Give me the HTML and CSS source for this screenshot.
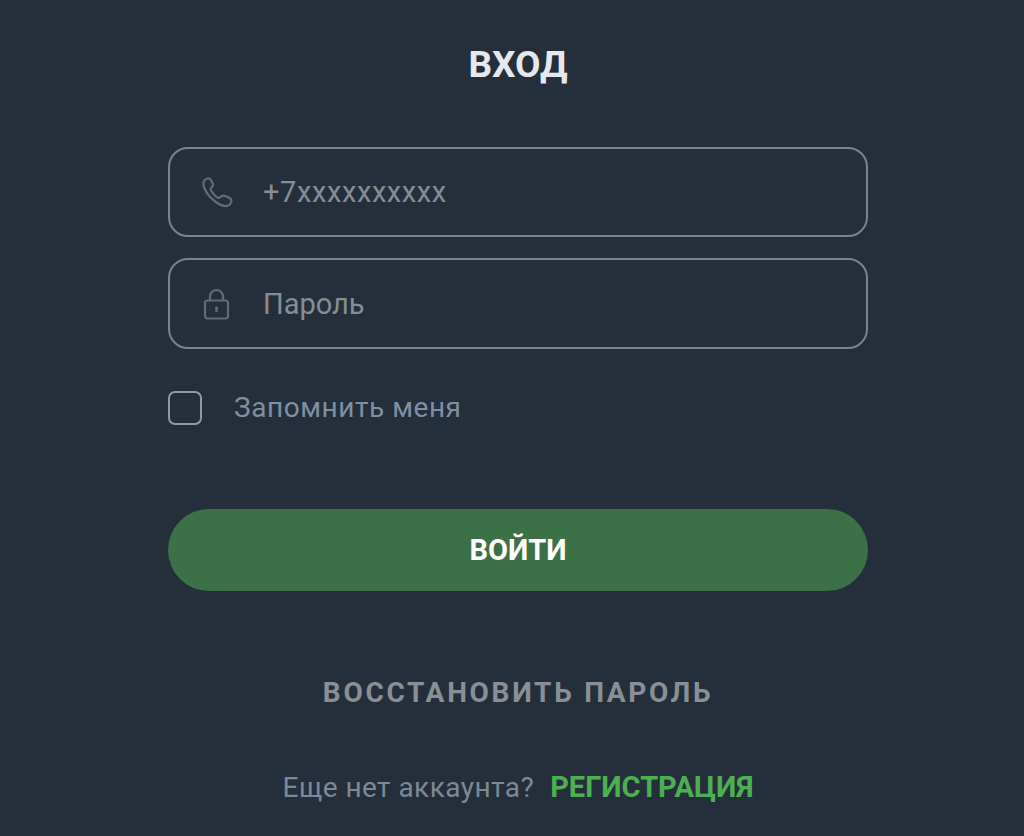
FILE: index.html
```html
<!DOCTYPE html>
<html lang="ru">
<head>
<meta charset="utf-8">
<title>Вход</title>
<link rel="stylesheet" href="styles.css">
</head>
<body>
<main class="login">
  <h1 class="title">ВХОД</h1>
  <form class="form">
    <div class="field field-phone">
      <svg class="icon" viewBox="0 0 32 32" width="32" height="32" fill="none" stroke="#5f6b78" stroke-width="2.2"><path d="M2.800 5.500C4.100 3 7.100 1.700 8.900 2.800c1.200.8 3 4.400 3.200 5.900.2 1.700-2.500 2.700-2.500 4.400 0 2.100 5.800 8.800 8.100 8.800 1.500 0 2.500-2.300 4.400-2.300 1.700 0 6.400 1.900 7.700 3.400 1.200 1.600.2 5-2.100 6.300-2.700 1.400-6.900.6-11.400-2.300C11 23.400 6.400 18.200 4 13.400 2.400 10.300 2 7.400 2.800 5.500Z"/></svg>
      <span class="placeholder placeholder-phone">+7xxxxxxxxxx</span>
    </div>
    <div class="field field-pass">
      <svg class="icon" viewBox="0 0 32 32" width="32" height="32" fill="none" stroke="#5f6b78" stroke-width="2.200"><rect x="4" y="12.500" width="23" height="18" rx="2.500"/><path d="M9 12.500V8.500a6.500 6.500 0 0 1 13 0v4"/><path d="M15.500 19.500v4.500" stroke-width="2.400"/><circle cx="15.500" cy="20" r="1.500" fill="#5f6b78" stroke="none"/></svg>
      <span class="placeholder">Пароль</span>
    </div>
    <label class="remember"><span class="box"></span><span class="remember-text">Запомнить меня</span></label>
    <button class="submit" type="button">ВОЙТИ</button>
    <a class="restore">ВОССТАНОВИТЬ ПАРОЛЬ</a>
    <p class="signup"><span class="signup-text">Еще нет аккаунта?</span><a class="signup-link">РЕГИСТРАЦИЯ</a></p>
  </form>
</main>
</body>
</html>
```

FILE: styles.css
```css
* { box-sizing: border-box; }
html, body { margin: 0; height: 100%; }
body {
  background: #252f3c;
  font-family: Roboto, "Noto Sans", sans-serif;
  overflow: hidden;
}
.login {
  width: 700px;
  margin-left: 168px;
  display: flex;
  flex-direction: column;
}
.title {
  margin: 42px 0 0;
  height: 105px;
  font-size: 37px;
  line-height: 46px;
  font-weight: 700;
  text-align: center;
  color: #e6e8eb;
}
.form { display: flex; flex-direction: column; }
.field {
  display: flex;
  align-items: center;
  border: 2px solid #7d8289;
  border-radius: 20px;
  padding-left: 31px;
}
.field-phone { height: 90px; }
.field-pass { height: 91px; margin-top: 21px; }
.icon { flex: none; }
.placeholder {
  margin-left: 30px;
  font-size: 29px;
  line-height: 34px;
  color: #868c94;
}
.placeholder-phone { letter-spacing: 0.6px; }
.remember {
  display: flex;
  align-items: center;
  margin-top: 42px;
}
.box {
  width: 34px;
  height: 34px;
  border: 2px solid #8d99a8;
  border-radius: 7px;
}
.remember-text {
  margin-left: 32px;
  font-size: 28px;
  letter-spacing: 0.55px;
  line-height: 34px;
  color: #7f8fa3;
}
.submit {
  margin-top: 84px;
  height: 82px;
  border: 0;
  border-radius: 41px;
  background: #3c7047;
  color: #fff;
  font: 700 29px/34px Roboto, sans-serif;
}
.restore {
  margin-top: 86px;
  font-size: 28px;
  line-height: 32px;
  font-weight: 700;
  letter-spacing: 2.700px;
  text-align: center;
  color: #8a8f96;
}
.signup {
  margin: 62px 0 0;
  display: flex;
  justify-content: center;
  align-items: baseline;
  font-size: 28px;
  line-height: 32px;
}
.signup-text { color: #7d8897; letter-spacing: 0.45px; }
.signup-link { margin-left: 16px; font-size: 29px; font-weight: 700; color: #4caf50; }
```
